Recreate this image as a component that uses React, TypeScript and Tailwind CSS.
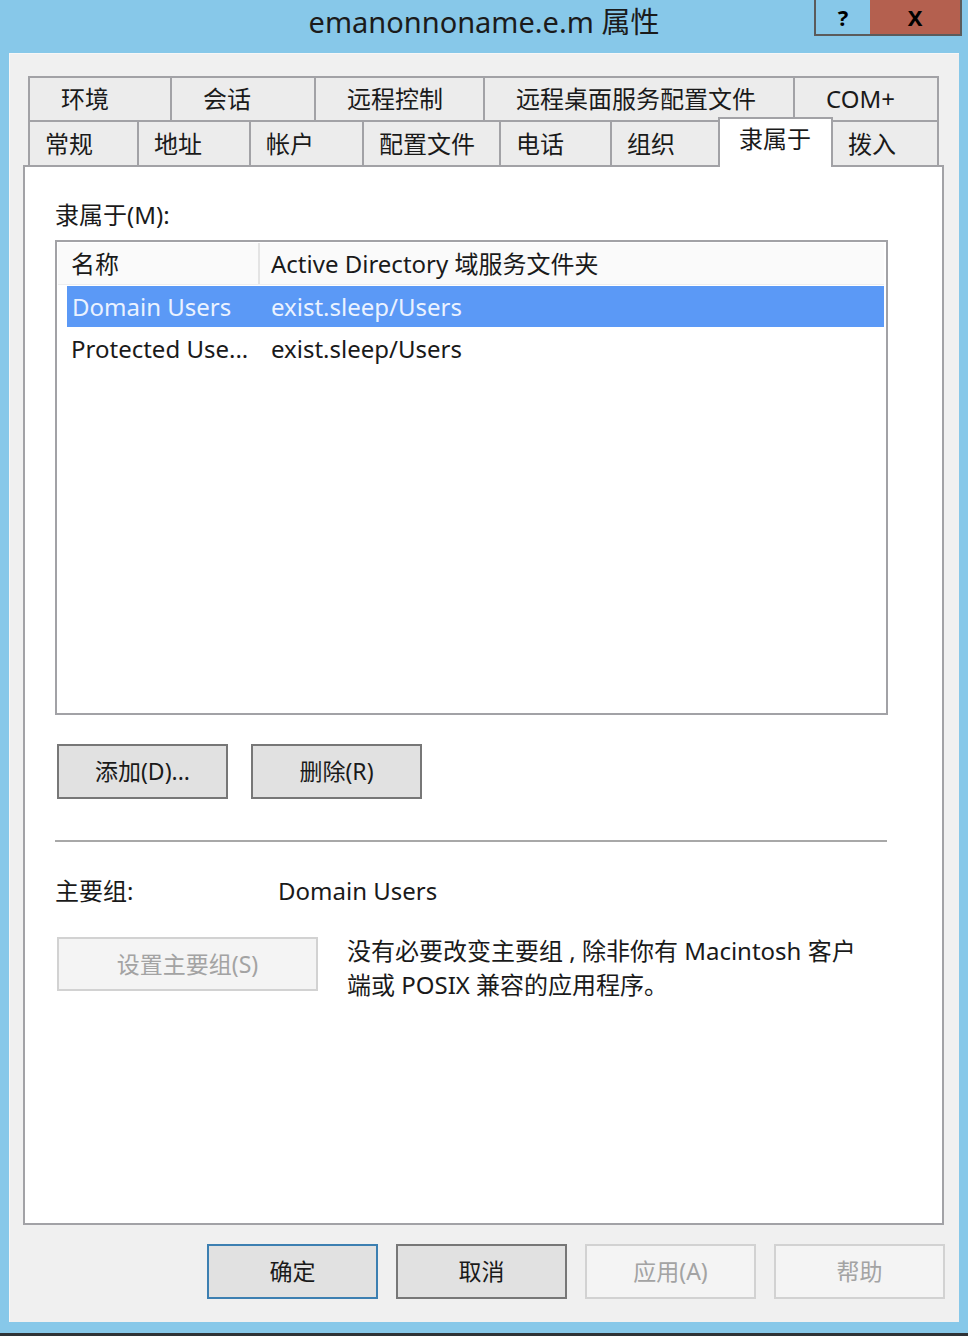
import React from "react";

const font = "font-['Noto_Sans','Noto_Sans_CJK_SC',sans-serif]";

const topTabs = [
  { label: "环境", w: "w-[142px]" },
  { label: "会话", w: "w-[144px]" },
  { label: "远程控制", w: "w-[169px]" },
  { label: "远程桌面服务配置文件", w: "w-[310px]" },
  { label: "COM+", w: "w-[146px]" },
];

const bottomTabs = [
  { label: "常规", w: "w-[109px]" },
  { label: "地址", w: "w-[112px]" },
  { label: "帐户", w: "w-[113px]" },
  { label: "配置文件", w: "w-[137px]" },
  { label: "电话", w: "w-[111px]" },
  { label: "组织", w: "w-[108px]" },
  { label: "隶属于", w: "w-[115px]", active: true },
  { label: "拨入", w: "w-[106px]" },
];

const Button = ({
  label,
  variant = "normal",
  className = "",
}: {
  label: string;
  variant?: "normal" | "default" | "disabled";
  className?: string;
}) => {
  const look =
    variant === "default"
      ? "bg-[#e1e1e1] border-[#3c7fb1] text-[#1a1a1a]"
      : variant === "disabled"
      ? "bg-[#f4f4f4] border-[#d2d2d2] text-[#a3a3a3]"
      : "bg-[#e1e1e1] border-[#777777] text-[#1a1a1a]";
  return (
    <div
      className={`flex items-center justify-center border-2 text-[23px] leading-none ${look} ${className}`}
    >
      {label}
    </div>
  );
};

const App = () => {
  return (
    <div
      className={`w-[968px] h-[1336px] bg-[#87c8e9] flex flex-col overflow-hidden ${font}`}
    >
      {/* Title bar */}
      <div className="relative h-[53px] flex justify-center">
        <div className="mt-[5px] text-[29px] leading-[34px] text-[#1b1b1b]">
          emanonnoname.e.m 属性
        </div>
        <div className="absolute top-0 right-[6px] flex h-[36px]">
          <div className="w-[56px] h-full border-l-2 border-b-2 border-[#5b5b5b] flex items-center justify-center text-[22px] font-bold text-black">
            ?
          </div>
          <div className="w-[92px] h-full bg-[#b4604f] border-r-2 border-b-2 border-[#5b5b5b] flex items-center justify-center text-[22px] font-bold text-black">
            X
          </div>
        </div>
      </div>

      {/* Window body */}
      <div className="ml-[9px] w-[950px] h-[1269px] bg-[#f0f0f0] border-t border-l border-[#f7f7f7] flex flex-col">
        {/* Tabs */}
        <div className="mt-[22px] ml-[18px] w-[911px] flex flex-col text-[24px] text-[#1a1a1a]">
          <div className="flex h-[44px]">
            {topTabs.map((t, i) => (
              <div
                key={t.label}
                className={`${t.w} h-full bg-[#ececec] border-t-2 border-l-2 border-[#a2a2a6] ${
                  i === topTabs.length - 1 ? "border-r-2" : ""
                } flex items-center pl-[31px] leading-none`}
              >
                {t.label}
              </div>
            ))}
          </div>
          <div className="flex h-[45px] items-end">
            {bottomTabs.map((t, i) =>
              t.active ? (
                <div
                  key={t.label}
                  className={`${t.w} relative z-10 h-[50px] translate-y-[2px] bg-white border-t-2 border-l-2 border-r-2 border-[#a2a2a6] flex items-start pt-[8px] pl-[19px] leading-none`}
                >
                  {t.label}
                </div>
              ) : (
                <div
                  key={t.label}
                  className={`${t.w} h-full bg-[#ececec] border-t-2 border-[#a2a2a6] ${
                    bottomTabs[i - 1]?.active ? "" : "border-l-2"
                  } ${i === bottomTabs.length - 1 ? "border-r-2" : ""} flex items-center pl-[15px] leading-none`}
                >
                  {t.label}
                </div>
              )
            )}
          </div>
        </div>

        {/* Panel */}
        <div className="ml-[13px] w-[921px] h-[1060px] bg-white border-2 border-[#a2a2a6] pl-[30px] flex flex-col text-[24px] text-[#1a1a1a]">
          <div className="mt-[32px] h-[32px] leading-[32px]">隶属于(M):</div>

          {/* List */}
          <div className="mt-[9px] w-[833px] h-[475px] border-2 border-[#a2a2a6] pt-px pl-px pr-[2px]">
            <div className="flex h-[42px] bg-[#fafafa] border-b border-[#eeeeee]">
              <div className="w-[200px] pl-[13px] flex items-center">名称</div>
              <div className="w-[2px] bg-[#e4e4e4]" />
              <div className="pl-[11px] flex items-center">
                Active Directory 域服务文件夹
              </div>
            </div>
            <div className="ml-[9px] mt-px flex h-[41px] items-center bg-[#5b99f6] text-[#eaf2ff]">
              <div className="w-[204px] pl-[5px]">Domain Users</div>
              <div>exist.sleep/Users</div>
            </div>
            <div className="ml-[9px] mt-[2px] flex h-[40px] items-center">
              <div className="w-[204px] pl-[4px]">Protected Use...</div>
              <div>exist.sleep/Users</div>
            </div>
          </div>

          {/* Add / remove */}
          <div className="mt-[29px] ml-[2px] flex gap-[23px]">
            <Button label="添加(D)..." className="w-[171px] h-[55px]" />
            <Button label="删除(R)" className="w-[171px] h-[55px]" />
          </div>

          <div className="mt-[41px] w-[832px] h-[2px] bg-[#a8a8a8]" />

          {/* Primary group */}
          <div className="mt-[33px] flex h-[32px] items-center">
            <div className="w-[223px]">主要组:</div>
            <div>Domain Users</div>
          </div>

          <div className="mt-[30px] flex">
            <Button
              label="设置主要组(S)"
              variant="disabled"
              className="ml-[2px] w-[261px] h-[54px]"
            />
            <div className="ml-[29px] -mt-[3px] w-[540px] leading-[34px]">
              <div>没有必要改变主要组 , 除非你有 Macintosh 客户</div>
              <div>端或 POSIX 兼容的应用程序。</div>
            </div>
          </div>
        </div>

        {/* Dialog buttons */}
        <div className="mt-[19px] flex gap-[18px] justify-end pr-[14px]">
          <Button label="确定" variant="default" className="w-[171px] h-[55px]" />
          <Button label="取消" className="w-[171px] h-[55px]" />
          <Button label="应用(A)" variant="disabled" className="w-[171px] h-[55px]" />
          <Button label="帮助" variant="disabled" className="w-[171px] h-[55px]" />
        </div>
      </div>

      <div className="h-[11px]" />
      <div className="h-[3px] bg-[#2f3337]" />
    </div>
  );
};

export default App;
